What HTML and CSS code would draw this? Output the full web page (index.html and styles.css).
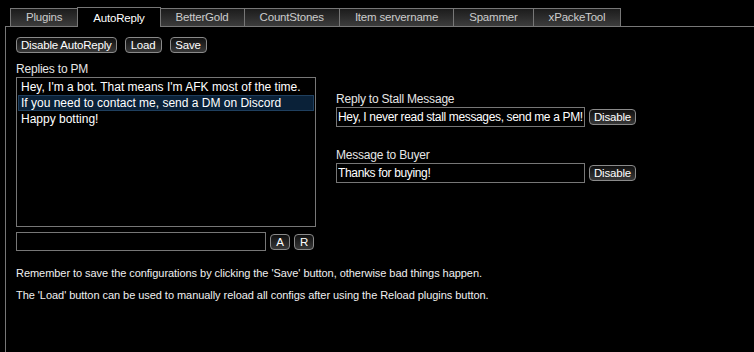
FILE: index.html
```html
<html>
    <head>
        <title>AutoReply</title>
        <link rel="stylesheet" href="styles.css">
    </head>
    <body>
        <div class="tabs">
            <div class="tab">Plugins</div>
            <div class="tab active">AutoReply</div>
            <div class="tab">BetterGold</div>
            <div class="tab">CountStones</div>
            <div class="tab">Item servername</div>
            <div class="tab">Spammer</div>
            <div class="tab">xPackeTool</div>
        </div>
        <div class="panel">
            <div class="toolbar">
                <button class="btn">Disable AutoReply</button>
                <button class="btn">Load</button>
                <button class="btn">Save</button>
            </div>
            <div class="columns">
                <div class="left">
                    <div class="label">Replies to PM</div>
                    <div class="listbox">
                        <div class="item">Hey, I'm a bot. That means I'm AFK most of the time.</div>
                        <div class="item selected">If you need to contact me, send a DM on Discord</div>
                        <div class="item">Happy botting!</div>
                    </div>
                    <div class="add-row">
                        <input type="text" class="field add-field" />
                        <button class="btn small">A</button>
                        <button class="btn small">R</button>
                    </div>
                </div>
                <div class="right">
                    <div class="label">Reply to Stall Message</div>
                    <div class="field-row">
                        <input type="text" class="field msg-field" value="Hey, I never read stall messages, send me a PM!" />
                        <button class="btn">Disable</button>
                    </div>
                    <div class="label second">Message to Buyer</div>
                    <div class="field-row">
                        <input type="text" class="field msg-field" value="Thanks for buying!" />
                        <button class="btn">Disable</button>
                    </div>
                </div>
            </div>
            <div class="notes">
                <p>Remember to save the configurations by clicking the 'Save' button, otherwise bad things happen.</p>
                <p>The 'Load' button can be used to manually reload all configs after using the Reload plugins button.</p>
            </div>
        </div>
    </body>
</html>
```

FILE: styles.css
```css
* {
  box-sizing: border-box;
}
body {
    margin: 0;
    background-color: #000;
    color: #fff;
    font-family: "Liberation Sans", Arial, sans-serif;
    font-size: 12px;
}
.tabs {
    display: flex;
    align-items: flex-end;
    height: 26px;
    padding-left: 10px;
}
.tab {
    height: 18px;
    line-height: 17px;
    padding: 0 15px;
    border: 1px solid #777;
    border-bottom: none;
    border-right: none;
    color: #ccc;
    background: linear-gradient(#1c1c1c, #3c3c3c);
    font-size: 11.5px;
    letter-spacing: -0.2px;
}
.tab:nth-last-child(1) {
    border-right: 1px solid #777;
}
.tab.active {
    height: 20px;
    line-height: 20px;
    margin-bottom: -1px;
    position: relative;
    z-index: 1;
    background: #000;
    color: #fff;
    border-right: 1px solid #777;
}
.tab.active + .tab {
    border-left: none;
}
.panel {
    margin-left: 5px;
    border-left: 1px solid #777;
    border-top: 1px solid #777;
    padding: 10px 0 40px 10px;
    min-height: 326px;
}
.toolbar {
    display: flex;
    gap: 8px;
    height: 16px;
}
.btn {
    height: 16px;
    min-width: 37px;
    padding: 0 4px;
    border: 1px solid #8a8a8a;
    border-radius: 4px;
    background: linear-gradient(#101010, #383838);
    color: #fff;
    font-family: "Liberation Sans", Arial, sans-serif;
    font-size: 11.5px;
    letter-spacing: -0.2px;
    line-height: 14px;
    text-align: center;
}
.btn.small {
    min-width: 0;
    width: 20px;
    padding: 0;
}
.columns {
    display: flex;
    margin-top: 9px;
}
.left {
    width: 300px;
}
.right {
    margin-left: 20px;
    padding-top: 30px;
}
.label {
    height: 14px;
    line-height: 14px;
    margin-bottom: 1px;
    color: #e6e6e6;
    letter-spacing: -0.2px;
}
.label.second {
    margin-top: 21px;
}
.listbox {
    height: 150px;
    border: 1px solid #777;
    padding: 1px 1px;
}
.item {
    height: 16px;
    line-height: 15px;
    padding: 0 2px;
    border: 1px solid transparent;
    font-size: 12px;
    white-space: nowrap;
}
.item.selected {
    background-color: #0a2138;
    border-color: #1f3f5e;
}
.add-row,
.field-row {
    display: flex;
    align-items: center;
    gap: 4px;
}
.add-row {
    margin-top: 5px;
}
.field {
    height: 19px;
    border: 1px solid #777;
    background-color: #000;
    color: #fff;
    font-family: "Liberation Sans", Arial, sans-serif;
    font-size: 12px;
    letter-spacing: -0.35px;
    padding: 0 1px;
    margin: 0;
    outline: none;
}
.add-field {
    width: 250px;
}
.msg-field {
    width: 249px;
    height: 20px;
}
.notes {
    margin-top: 11px;
}
.notes p {
    margin: 0;
    line-height: 22px;
    font-size: 11px;
    letter-spacing: -0.05px;
    color: #f0f0f0;
}
```
